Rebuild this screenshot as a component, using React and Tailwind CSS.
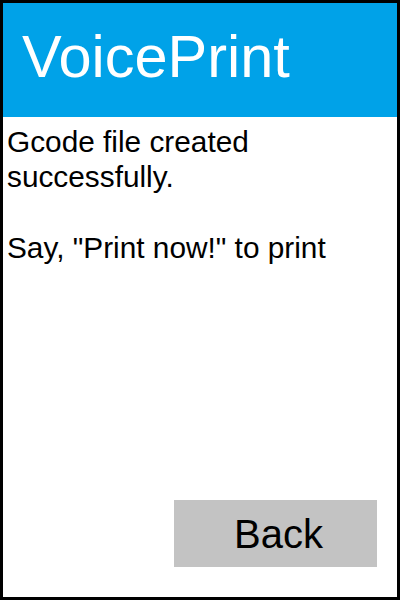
export default function App() {
    return (
        <div className="w-[400px] h-[600px] border-[3px] border-black bg-white flex flex-col font-['Liberation_Sans',Arial,sans-serif]">
            <div className="h-[114px] bg-[#00a2e8] pl-[19px] pt-[24px]">
                <h1 className="text-[59.5px] leading-none text-white">VoicePrint</h1>
            </div>

            <p className="mt-[7px] pl-[4px] text-[29.8px] leading-[35.3px] text-black">
                Gcode file created
                <br/>
                successfully.
                <br/>
                <br/>
                Say, "Print now!" to print
            </p>

            <button className="mt-auto self-end mr-[20px] mb-[30px] w-[203px] h-[67px] bg-[#c3c3c3] pl-[6px] text-[40px] leading-none text-black">
                Back
            </button>
        </div>
    );
}
